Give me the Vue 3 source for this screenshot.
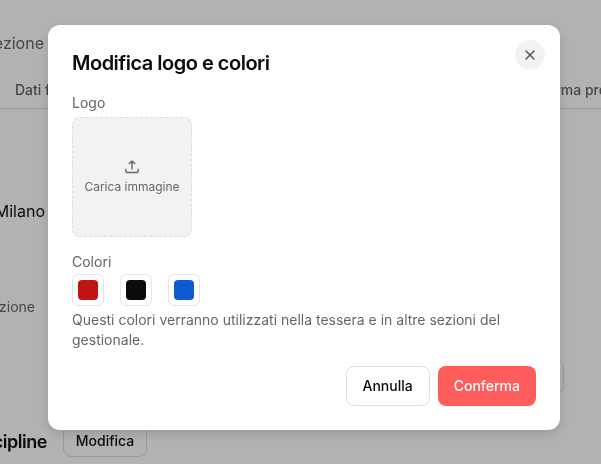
<template>
  <div class="page">
    <div class="row-top"><span class="edge">Sezione</span></div>
    <div class="tabs">
      <span class="tab-first">Dati fiscali</span>
      <span>Forma prodotto</span>
    </div>
    <div class="row-city"><span class="edge city">Milano</span></div>
    <div class="row-desc"><span class="edge muted">Descrizione</span></div>
    <div class="row-ghost"><span class="ghost"></span></div>
    <div class="row-disc">
      <span class="edge heading">Discipline</span>
      <button class="btn-small">Modifica</button>
    </div>
  </div>

  <div class="overlay">
    <div class="modal">
      <button class="close" aria-label="Chiudi">
        <svg width="12" height="12" viewBox="0 0 12 12" fill="none" stroke="#555" stroke-width="1.5" stroke-linecap="round">
          <path d="M2 2l8 8M10 2l-8 8" />
        </svg>
      </button>

      <h2 class="title">Modifica logo e colori</h2>

      <div class="label">Logo</div>
      <div class="upload">
        <svg width="16" height="16" viewBox="0 0 16 16" fill="none" stroke="#666" stroke-width="1.4" stroke-linecap="round" stroke-linejoin="round">
          <path d="M8 10V2M5.2 4.6 8 1.9l2.8 2.7" />
          <path d="M1.8 10.2v1.2c0 1.2.9 2.1 2.1 2.1h8.2c1.2 0 2.1-.9 2.1-2.1v-1.2" />
        </svg>
        <span class="upload-text">Carica immagine</span>
      </div>

      <div class="label label-colors">Colori</div>
      <div class="swatches">
        <div v-for="c in colori" :key="c" class="swatch">
          <span class="chip" :style="{ background: c }"></span>
        </div>
      </div>
      <p class="help">Questi colori verranno utilizzati nella tessera e in altre sezioni del gestionale.</p>

      <div class="actions">
        <button class="btn btn-outline">Annulla</button>
        <button class="btn btn-primary">Conferma</button>
      </div>
    </div>
  </div>
</template>

<script setup>
const colori = ["#c01414", "#0c0c0c", "#0d5bce"];
</script>

<style>
html, body {
  overflow: hidden;
  background: #fff;
}
</style>

<style scoped>
.page {
  width: 601px;
  height: 464px;
  overflow: hidden;
  font-family: Inter, "Liberation Sans", sans-serif;
  color: #111;
  display: flex;
  flex-direction: column;
  will-change: transform;
}

/* testi che escono a sinistra della pagina */
.edge {
  width: 44px;
  display: flex;
  justify-content: flex-end;
  white-space: nowrap;
  flex-shrink: 0;
}

.row-top {
  display: flex;
  height: 20px;
  margin-top: 33px;
  font-size: 16px;
  line-height: 20px;
  color: #666;
}

.tabs {
  display: flex;
  height: 56px;
  padding: 27px 0 0 15px;
  box-sizing: border-box;
  border-bottom: 1px solid #ddd;
  font-size: 14px;
  font-weight: 500;
  line-height: 20px;
  color: #666;
  white-space: nowrap;
}

.tab-first {
  width: 524px;
  flex-shrink: 0;
}

.row-city {
  display: flex;
  margin-top: 92px;
  height: 20px;
  font-size: 16px;
  line-height: 20px;
  color: #111;
}

.city {
  width: 45px;
}

.row-desc {
  display: flex;
  margin-top: 76px;
  height: 20px;
  font-size: 14px;
  line-height: 20px;
  color: #666;
}

.muted {
  width: 35px;
}

.row-ghost {
  display: flex;
  justify-content: flex-end;
  margin-top: 44px;
  padding-right: 37px;
}

.ghost {
  width: 60px;
  height: 32px;
  box-sizing: border-box;
  border: 1px solid #ddd;
  border-radius: 6px;
}

.row-disc {
  display: flex;
  align-items: center;
  gap: 16px;
  margin-top: 32px;
  font-size: 18px;
  font-weight: 600;
  letter-spacing: -0.45px;
}

.heading {
  width: 47px;
}

.btn-small {
  width: 84px;
  height: 32px;
  padding: 0 0 1px;
  border: 1px solid #ddd;
  border-radius: 8px;
  background: transparent;
  font: 500 14px Inter, "Liberation Sans", sans-serif;
  color: #111;
}

.overlay {
  position: fixed;
  inset: 0;
  background: rgba(0, 0, 0, 0.3);
  font-family: Inter, "Liberation Sans", sans-serif;
  will-change: transform;
}

.modal {
  position: relative;
  box-sizing: border-box;
  width: 512px;
  height: 405px;
  margin: 25px 0 0 48px;
  padding: 24px;
  background: #fff;
  border-radius: 12px;
  box-shadow: 0 4px 12px rgba(0, 0, 0, 0.15);
}

.close {
  position: absolute;
  top: 15px;
  right: 15px;
  width: 30px;
  height: 30px;
  padding: 0;
  border: 0;
  border-radius: 50%;
  background: #f2f2f2;
  display: flex;
  align-items: center;
  justify-content: center;
}

.title {
  margin: 0;
  font-size: 20px;
  font-weight: 600;
  letter-spacing: -0.5px;
  line-height: 28px;
  color: #0c0c0c;
}

.label {
  margin-top: 16px;
  font-size: 14px;
  line-height: 20px;
  color: #666;
}

.upload {
  box-sizing: border-box;
  width: 120px;
  height: 120px;
  margin-top: 4px;
  padding-bottom: 1px;
  background: #f2f2f2;
  border: 1px dashed #ddd;
  border-radius: 8px;
  display: flex;
  flex-direction: column;
  align-items: center;
  justify-content: center;
  gap: 4px;
}

.upload-text {
  font-size: 12px;
  line-height: 16px;
  color: #666;
}

.label-colors {
  margin-top: 15px;
}

.swatches {
  display: flex;
  gap: 16px;
  margin-top: 2px;
}

.swatch {
  box-sizing: border-box;
  width: 32px;
  height: 32px;
  background: #fff;
  border: 1px solid #e5e5e5;
  border-radius: 6px;
  display: flex;
  align-items: center;
  justify-content: center;
}

.chip {
  width: 20px;
  height: 20px;
  border-radius: 4px;
}

.help {
  margin: 4px 0 0;
  font-size: 14px;
  line-height: 20px;
  color: #666;
}

.actions {
  display: flex;
  justify-content: flex-end;
  gap: 8px;
  margin-top: 16px;
}

.btn {
  box-sizing: border-box;
  height: 40px;
  padding: 0 16px 1px;
  border-radius: 8px;
  font: 500 14px Inter, "Liberation Sans", sans-serif;
}

.btn-outline {
  background: #fff;
  border: 1px solid #e0e0e0;
  color: #0c0c0c;
}

.btn-primary {
  background: #ff5c5c;
  border: 0;
  color: #fff;
}
</style>
